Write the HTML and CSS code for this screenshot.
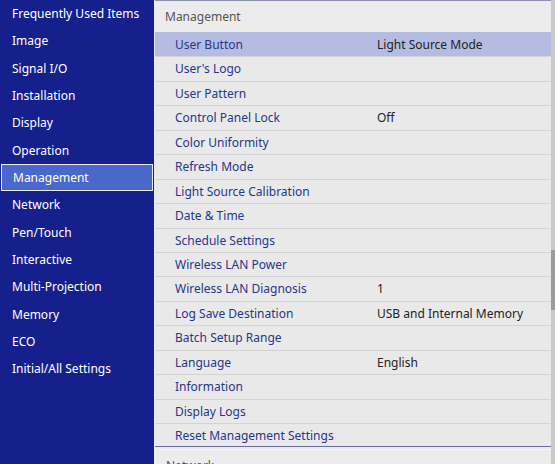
FILE: index.html
```html
<!DOCTYPE html>
<html>
<head>
<meta charset="utf-8">
<link rel="stylesheet" href="styles.css">
</head>
<body>
<div class="menu-screen">
  <ul class="menu-side">
    <li class="menu-side_item">Frequently Used Items</li>
    <li class="menu-side_item">Image</li>
    <li class="menu-side_item">Signal I/O</li>
    <li class="menu-side_item">Installation</li>
    <li class="menu-side_item">Display</li>
    <li class="menu-side_item">Operation</li>
    <li class="menu-side_item menu-side_item--active">Management</li>
    <li class="menu-side_item">Network</li>
    <li class="menu-side_item">Pen/Touch</li>
    <li class="menu-side_item">Interactive</li>
    <li class="menu-side_item">Multi-Projection</li>
    <li class="menu-side_item">Memory</li>
    <li class="menu-side_item">ECO</li>
    <li class="menu-side_item">Initial/All Settings</li>
  </ul>

  <div class="menu-panel">
    <div class="menu-group">
      <div class="menu-group_title">Management</div>
      <div class="menu-row menu-row--active">
        <span class="menu-row_label">User Button</span>
        <span class="menu-row_value">Light Source Mode</span>
      </div>
      <div class="menu-row"><span class="menu-row_label">User's Logo</span></div>
      <div class="menu-row"><span class="menu-row_label">User Pattern</span></div>
      <div class="menu-row">
        <span class="menu-row_label">Control Panel Lock</span>
        <span class="menu-row_value">Off</span>
      </div>
      <div class="menu-row"><span class="menu-row_label">Color Uniformity</span></div>
      <div class="menu-row"><span class="menu-row_label">Refresh Mode</span></div>
      <div class="menu-row"><span class="menu-row_label">Light Source Calibration</span></div>
      <div class="menu-row"><span class="menu-row_label">Date &amp; Time</span></div>
      <div class="menu-row"><span class="menu-row_label">Schedule Settings</span></div>
      <div class="menu-row"><span class="menu-row_label">Wireless LAN Power</span></div>
      <div class="menu-row">
        <span class="menu-row_label">Wireless LAN Diagnosis</span>
        <span class="menu-row_value">1</span>
      </div>
      <div class="menu-row">
        <span class="menu-row_label">Log Save Destination</span>
        <span class="menu-row_value">USB and Internal Memory</span>
      </div>
      <div class="menu-row"><span class="menu-row_label">Batch Setup Range</span></div>
      <div class="menu-row">
        <span class="menu-row_label">Language</span>
        <span class="menu-row_value">English</span>
      </div>
      <div class="menu-row"><span class="menu-row_label">Information</span></div>
      <div class="menu-row"><span class="menu-row_label">Display Logs</span></div>
      <div class="menu-row menu-row--last"><span class="menu-row_label">Reset Management Settings</span></div>
    </div>
    <div class="menu-group menu-group--next">
      <div class="menu-group_title">Network</div>
    </div>
  </div>

  <div class="menu-scroll">
    <div class="menu-scroll_thumb"></div>
  </div>
</div>
</body>
</html>
```

FILE: styles.css
```css
html, body {
  margin: 0;
  height: 100%;
  overflow: hidden;
}

body {
  font-family: "Noto Sans", "Open Sans", sans-serif;
  font-size: 12px;
  background-color: #e9e9e9;
}

.menu-screen {
  display: flex;
  height: 464px;
}

/* left column with the top level menu */
.menu-side {
  width: 154px;
  flex-shrink: 0;
  margin: 0;
  padding: 0;
  list-style: none;
  background-color: #16208c;
}
.menu-side_item {
  height: 27.35px;
  line-height: 27.35px;
  padding-left: 12px;
  color: #fff;
  white-space: nowrap;
}
.menu-side_item--active {
  box-sizing: border-box;
  margin: 0 1px;
  padding-left: 11px;
  line-height: 25.35px;
  background-color: #4a67cc;
  border: 1px solid #e8ecff;
}

/* right column with the sub menu */
.menu-panel {
  flex: 1;
  margin-left: 1px;
  background-color: #e9e9e9;
  border-top: 1px solid #8c8fae;
  overflow: hidden;
}
.menu-group_title {
  height: 31px;
  line-height: 31px;
  padding-left: 10px;
  color: #555;
  background-color: #ececec;
}
.menu-row {
  display: flex;
  height: 24.45px;
  line-height: 24.45px;
  padding-left: 20px;
  box-sizing: border-box;
  border-top: 1px solid #d3d3d3;
}
.menu-row--active {
  background-color: #b4bde1;
  border-top-color: #b4bde1;
}
.menu-row--last {
  border-bottom: 1px solid #6b6f97;
}
.menu-row_label {
  width: 202px;
  color: #26368c;
}
.menu-row_value {
  color: #222;
}

.menu-group--next {
  margin-top: 2px;
  border-top: 1px solid #f4f4f4;
  border-left: 1px solid #f4f4f4;
}

/* scroll bar on the far right */
.menu-scroll {
  width: 4px;
  flex-shrink: 0;
  background-color: #c9c9c9;
}
.menu-scroll_thumb {
  height: 60px;
  margin-top: 250px;
  background-color: #9b9b9b;
}
```
